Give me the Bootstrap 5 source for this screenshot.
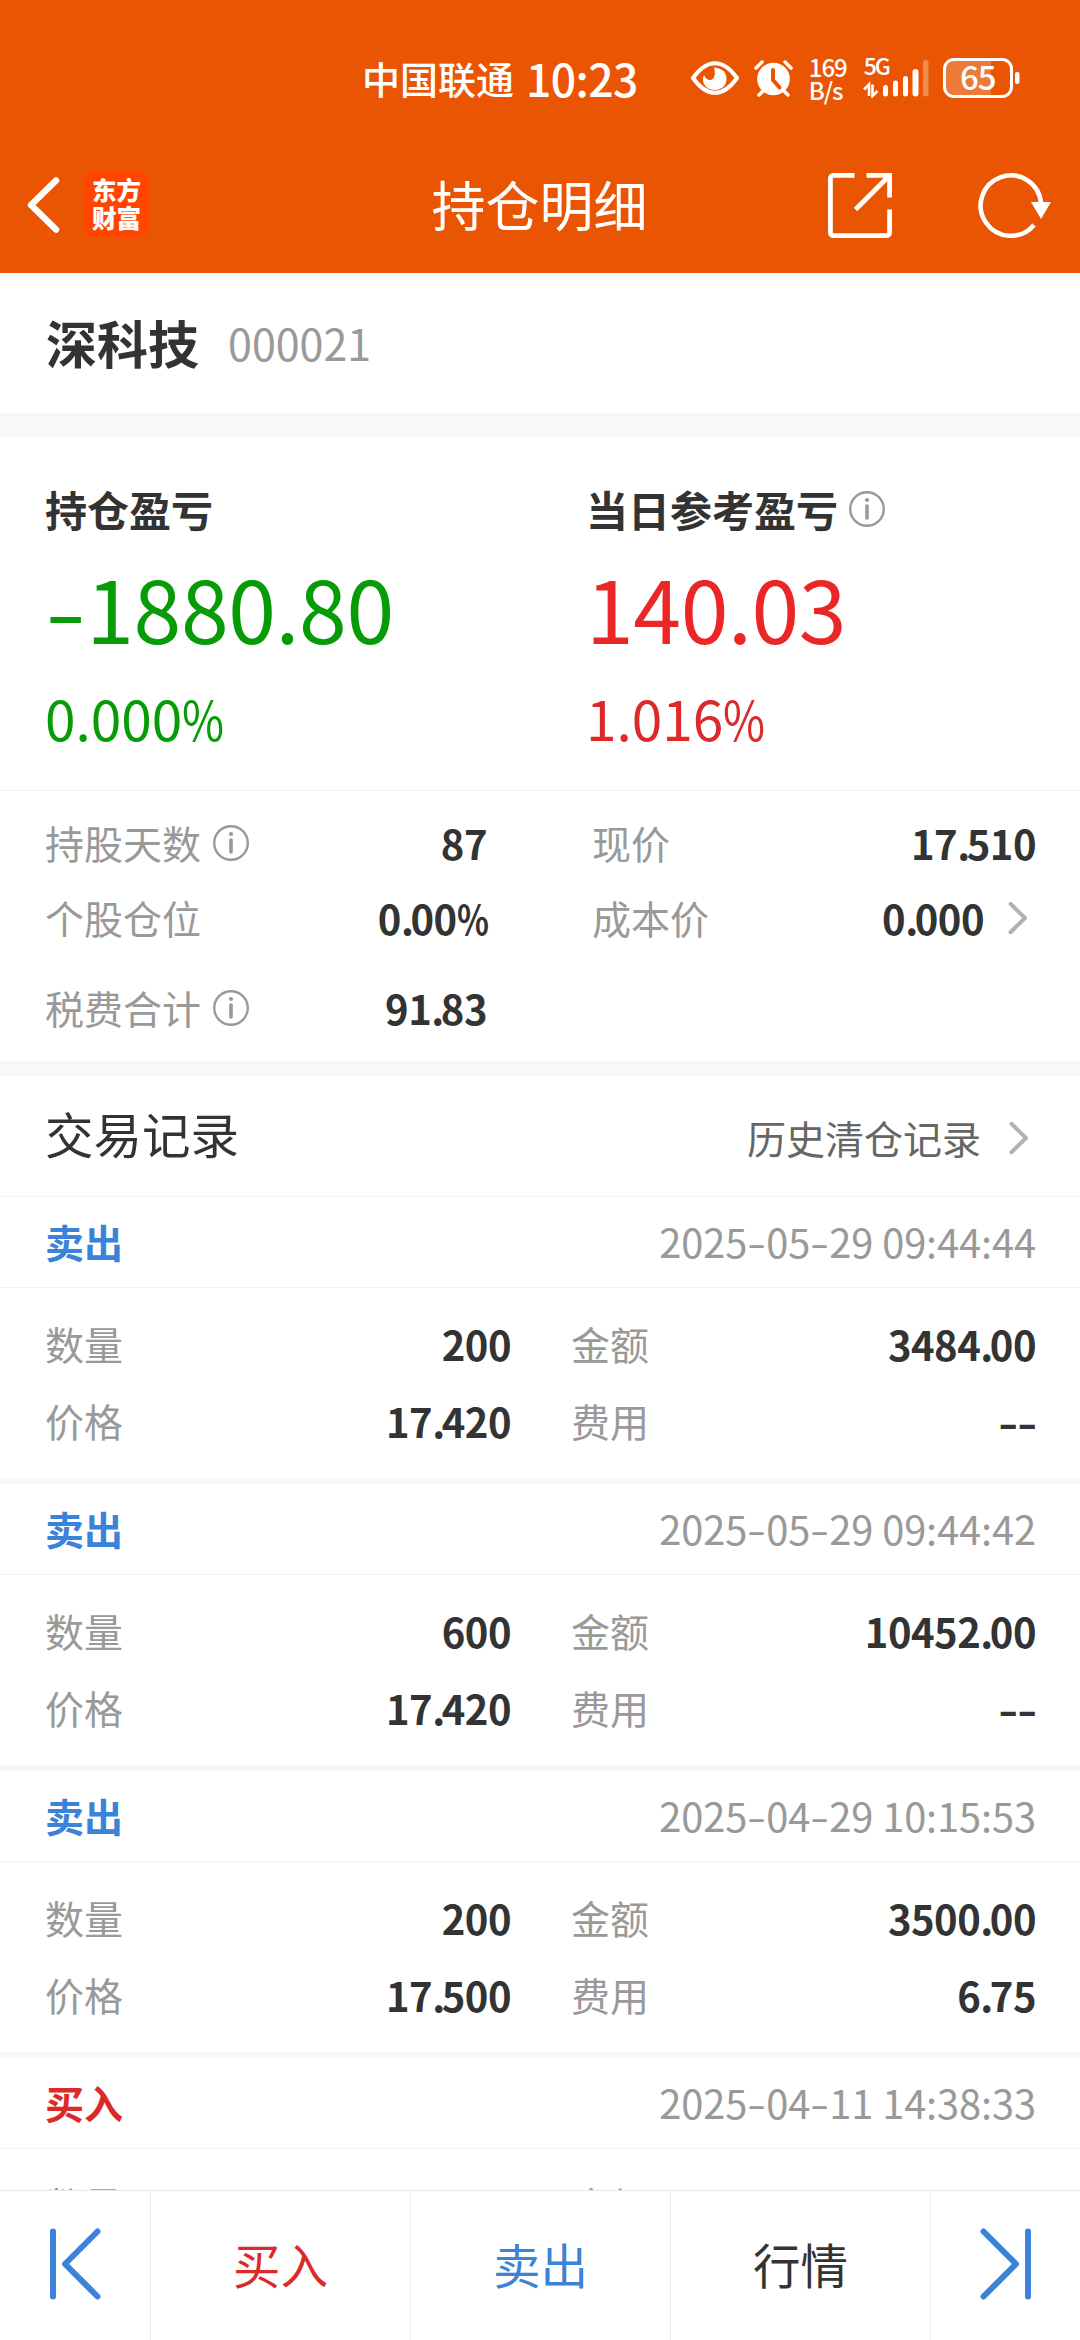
<!DOCTYPE html>
<html lang="zh-CN">
<head>
<meta charset="utf-8">
<meta name="viewport" content="width=device-width, initial-scale=1">
<title>持仓明细</title>
<link href="https://cdn.jsdelivr.net/npm/bootstrap@5.3.0/dist/css/bootstrap.min.css" rel="stylesheet">
<style>
  body { font-family: "Noto Sans CJK SC", sans-serif; color: #333; background: #fff; }
  .app { width: 1080px; height: 2340px; }
  .app svg { display: block; flex: none; }
  .top { background: #ea5503; height: 273px; }
  .status { height: 136px; padding: 44px 58px 0 362px; font-weight: 500; }
  .status-line { height: 68px; }
  .carrier { font-size: 38px; line-height: 56px; }
  .clock { font-size: 44.5px; line-height: 56px; margin-left: 12px; letter-spacing: -.6px; }
  .eye { margin-left: 53px; }
  .alarm { margin-left: 15px; }
  .speed { font-size: 24px; line-height: 23px; width: 38px; margin-left: 16px; letter-spacing: -1px; }
  .cell-signal { width: 66px; height: 44px; margin-left: 16px; }
  .gen { position: absolute; left: 1px; top: -5px; font-size: 23px; line-height: 28px; letter-spacing: -2px; }
  .battery { width: 78px; height: 40px; margin-left: 14px; }
  .battery-level { position: absolute; left: 0; top: -1px; width: 70px; line-height: 38px; font-size: 33px; letter-spacing: -1px; }
  .titlebar { height: 137px; padding: 0 28px 0 25px; }
  .side { width: 300px; }
  .logo { width: 67px; height: 67px; border-radius: 14px; background: #ff4500; margin-left: 22px; font-size: 24.5px; line-height: 28.5px; font-weight: 900; padding-bottom: 1px; }
  .page-title { font-size: 54px; line-height: 78px; margin-bottom: 2px; padding-left: 2px; }
  .stock { height: 140px; padding: 0 46px 3px; }
  .stock-name { font-size: 51px; font-weight: 700; line-height: 76px; }
  .stock-code { font-size: 43px; color: #999; margin-left: 29px; line-height: 76px; }
  .band { background: #f6f8fa; flex: none; }
  .band-lg { height: 24px; } .band-md { height: 15px; } .band-sm { height: 6px; }
  .profit { height: 353px; padding: 42px 0 0 45px; }
  .profit-col { width: 541px; }
  .profit-label { font-size: 42px; font-weight: 700; line-height: 60px; height: 60px; gap: 11px; }
  .profit-sum { font-size: 86px; line-height: 136px; letter-spacing: -.4px; }
  .profit-rate { font-size: 55px; line-height: 84px; }
  .down { color: #079c07; } .up { color: #ea2626; }
  .sell { color: #3b82d9; } .buy { color: #dc2a2a; }
  .rule { height: 1px; background: #f3f3f4; flex: none; }
  .stats { height: 270px; padding: 14px 44px 0 45px; font-size: 39px; }
  .stat-col { width: 442px; }
  .stat-col-b { width: 444px; }
  .stat { height: 75px; }
  .stat-tall { height: 105px; }
  .lbl { color: #999; gap: 12px; }
  .num { font-size: 40px; font-weight: 700; letter-spacing: -.5px; color: #333; }
  .pt { margin-right: -3px; }
  .dsh { display: inline-block; font-style: normal; width: .48em; transform: scaleX(1.38); transform-origin: 0 50%; }
  .pct { display: inline-block; width: .76em; transform: scaleX(.83); transform-origin: 0 50%; }
  .history { height: 120px; padding: 0 51px 0 45px; }
  .history-title { font-size: 48.5px; padding-bottom: 5px; }
  .history-link { font-size: 39px; color: #666; padding-top: 3px; gap: 28px; }
  .record-head { height: 90px; padding: 0 44px 2px 45px; font-size: 39px; }
  .record-kind { font-weight: 700; }
  .record-time { font-size: 39.8px; color: #999; letter-spacing: -.1px; }
  .record-body { height: 190px; padding: 17px 44px 19px 45px; font-size: 39px; }
  .record-body .cell-a { width: 466px; } .record-body .cell-b { width: 465px; }
  .record-line { height: 77px; }
  .dock { height: 150px; border-top: 1px solid #e9e9ea; background: #fff; font-size: 47.5px; }
  .dock-end { width: 150px; padding-bottom: 3px; }
  .dock-item { flex: 1 1 0; border-left: 1px solid #ececed; padding-bottom: 3px; }
  .dock-last { border-left: 1px solid #ececed; }
</style>
</head>
<body>
<svg width="0" height="0" class="position-absolute">
  <symbol id="info" viewBox="0 0 36 36"><circle cx="18" cy="18" r="16.8" fill="none" stroke="#999" stroke-width="2.4"/><circle cx="18" cy="9" r="2.1" fill="#999"/><path d="M18 15v12" stroke="#999" stroke-width="3.6" stroke-linecap="round"/></symbol>
  <symbol id="next" viewBox="0 0 20 34"><path d="M2.5 2.8 17 17 2.5 31.2" fill="none" stroke="#b2b2b2" stroke-width="4" stroke-linecap="round" stroke-linejoin="round"/></symbol>
</svg>
<div class="app d-flex flex-column overflow-hidden">
  <header class="top text-white flex-shrink-0">
    <div class="status">
      <div class="status-line d-flex align-items-center w-100 text-nowrap">
        <span class="carrier">中国联通</span><span class="clock">10:23</span>
        <svg class="eye" width="48" height="34" viewBox="0 0 48 34"><path d="M2 17C8 8.500 15 2.200 24 2.200S40 8.500 46 17C40 25.500 33 31.800 24 31.800S8 25.500 2 17Z" fill="none" stroke="#fff" stroke-width="4" stroke-linejoin="round"/><path d="M23 6.500c10 1 12.500 6 12.500 11.500C35.500 25 30 29 24 29s-12-4-12-10c0-2 .4-3.600 1-5 1.400 3.300 3.500 5 6 5 4.500 0 6-6 4-12.500Z" fill="#fff"/></svg>
        <svg class="alarm" width="39" height="37" viewBox="0 0 39 37"><circle cx="19.500" cy="19" r="16.300" fill="#fff"/><path d="M2 8 8 2M37 8l-6-6M9 31l-4 4M30 31l4 4" stroke="#fff" stroke-width="3.500" stroke-linecap="round"/><path d="M19 10v10l6.500 7.500" fill="none" stroke="#ea5503" stroke-width="4" stroke-linecap="round" stroke-linejoin="round"/></svg>
        <span class="speed d-flex flex-column"><span>169</span><span>B/s</span></span>
        <span class="cell-signal position-relative d-flex align-items-center"><span class="gen">5G</span>
          <svg width="66" height="40" viewBox="0 0 66 40" fill="#fff"><path d="M6 38V26.500L1 31.500M9.500 26.500V38l5-5" fill="none" stroke="#fff" stroke-width="2.600"/><rect x="20" y="27" width="5" height="11.500" rx="2.500"/><rect x="30" y="22.500" width="5" height="16" rx="2.500"/><rect x="40" y="18" width="5" height="20.500" rx="2.500"/><rect x="49.500" y="11" width="6" height="27.500" rx="3"/><rect x="60" y="2" width="5.500" height="36.500" rx="2.700" opacity=".32"/></svg></span>
        <span class="battery position-relative"><svg width="78" height="40" viewBox="0 0 78 40"><path d="M11 2h37v36H11a9 9 0 0 1-9-9V11a9 9 0 0 1 9-9Z" fill="#fff" opacity=".22"/><rect x="1.500" y="1.500" width="67" height="37" rx="9.500" fill="none" stroke="#fff" stroke-width="3"/><rect x="72" y="14" width="4.500" height="12" rx="2" fill="#fff"/></svg><span class="battery-level text-center">65</span></span>
      </div>
    </div>
    <div class="titlebar d-flex align-items-center justify-content-between">
      <div class="side d-flex align-items-center">
        <svg width="36" height="56" viewBox="0 0 36 56"><path d="M31 3.500 6 28 31 52.500" fill="none" stroke="#fff" stroke-width="6.500" stroke-linecap="round" stroke-linejoin="round"/></svg>
        <div class="logo d-flex flex-column align-items-center justify-content-center"><span>东方</span><span>财富</span></div>
      </div>
      <div class="page-title">持仓明细</div>
      <div class="side d-flex align-items-center justify-content-end">
        <svg width="64" height="66" viewBox="0 0 64 66" fill="none" stroke="#fff" stroke-width="4.800"><path d="M26.500 3.400H5.400a3 3 0 0 0-3 3v54.200a3 3 0 0 0 3 3h53.200a3 3 0 0 0 3-3V37.500M38.500 3.400h23.100v22M61 4 27.500 37.500"/></svg>
        <svg style="margin-left:86px" width="74" height="66" viewBox="0 0 74 66"><path d="M63 31.500A30.200 30.200 0 1 0 56 53" fill="none" stroke="#fff" stroke-width="4.600"/><path d="M53 30h20L63 47Z" fill="#fff"/></svg>
      </div>
    </div>
  </header>

  <section class="stock d-flex align-items-center flex-shrink-0"><span class="stock-name">深科技</span><span class="stock-code">000021</span></section>
  <div class="band band-lg"></div>

  <section class="profit d-flex flex-shrink-0">
    <div class="profit-col">
      <div class="profit-label d-flex align-items-center">持仓盈亏</div>
      <div class="profit-sum down"><i class="dsh">-</i>1880.80</div>
      <div class="profit-rate down">0.000<span class="pct">%</span></div>
    </div>
    <div>
      <div class="profit-label d-flex align-items-center">当日参考盈亏<svg width="36" height="36"><use href="#info"/></svg></div>
      <div class="profit-sum up">140.03</div>
      <div class="profit-rate buy">1.016<span class="pct">%</span></div>
    </div>
  </section>
  <div class="rule"></div>

  <section class="stats d-flex justify-content-between flex-shrink-0">
    <div class="stat-col">
      <div class="stat d-flex align-items-center justify-content-between"><span class="lbl d-flex align-items-center">持股天数<svg width="36" height="36"><use href="#info"/></svg></span><span class="num">87</span></div>
      <div class="stat d-flex align-items-center justify-content-between"><span class="lbl">个股仓位</span><span class="num">0<span class="pt">.</span>00<span class="pct">%</span></span></div>
      <div class="stat stat-tall d-flex align-items-center justify-content-between"><span class="lbl d-flex align-items-center">税费合计<svg width="36" height="36"><use href="#info"/></svg></span><span class="num">91<span class="pt">.</span>83</span></div>
    </div>
    <div class="stat-col-b">
      <div class="stat d-flex align-items-center justify-content-between"><span class="lbl">现价</span><span class="num">17<span class="pt">.</span>510</span></div>
      <div class="stat d-flex align-items-center"><span class="lbl me-auto">成本价</span><span class="num">0<span class="pt">.</span>000</span><svg style="margin:0 8px 0 24px" width="20" height="34"><use href="#next"/></svg></div>
    </div>
  </section>
  <div class="band band-md"></div>

  <section class="history d-flex align-items-center justify-content-between flex-shrink-0">
    <span class="history-title">交易记录</span>
    <span class="history-link d-flex align-items-center">历史清仓记录<svg width="20" height="34"><use href="#next"/></svg></span>
  </section>
  <div class="rule"></div>

  <main class="flex-grow-1 overflow-hidden" style="min-height:0">
    <article>
      <div class="record-head d-flex align-items-center justify-content-between"><span class="record-kind sell">卖出</span><span class="record-time">2025<i class="dsh">-</i>05<i class="dsh">-</i>29 09:44:44</span></div>
      <div class="rule"></div>
      <div class="record-body">
        <div class="record-line d-flex justify-content-between align-items-center"><div class="cell-a d-flex justify-content-between align-items-center"><span class="lbl">数量</span><span class="num">200</span></div><div class="cell-b d-flex justify-content-between align-items-center"><span class="lbl">金额</span><span class="num">3484<span class="pt">.</span>00</span></div></div>
        <div class="record-line d-flex justify-content-between align-items-center"><div class="cell-a d-flex justify-content-between align-items-center"><span class="lbl">价格</span><span class="num">17<span class="pt">.</span>420</span></div><div class="cell-b d-flex justify-content-between align-items-center"><span class="lbl">费用</span><span class="num"><i class="dsh">-</i><i class="dsh">-</i></span></div></div>
      </div>
      <div class="band band-sm"></div>
    </article>
    <article>
      <div class="record-head d-flex align-items-center justify-content-between"><span class="record-kind sell">卖出</span><span class="record-time">2025<i class="dsh">-</i>05<i class="dsh">-</i>29 09:44:42</span></div>
      <div class="rule"></div>
      <div class="record-body">
        <div class="record-line d-flex justify-content-between align-items-center"><div class="cell-a d-flex justify-content-between align-items-center"><span class="lbl">数量</span><span class="num">600</span></div><div class="cell-b d-flex justify-content-between align-items-center"><span class="lbl">金额</span><span class="num">10452<span class="pt">.</span>00</span></div></div>
        <div class="record-line d-flex justify-content-between align-items-center"><div class="cell-a d-flex justify-content-between align-items-center"><span class="lbl">价格</span><span class="num">17<span class="pt">.</span>420</span></div><div class="cell-b d-flex justify-content-between align-items-center"><span class="lbl">费用</span><span class="num"><i class="dsh">-</i><i class="dsh">-</i></span></div></div>
      </div>
      <div class="band band-sm"></div>
    </article>
    <article>
      <div class="record-head d-flex align-items-center justify-content-between"><span class="record-kind sell">卖出</span><span class="record-time">2025<i class="dsh">-</i>04<i class="dsh">-</i>29 10:15:53</span></div>
      <div class="rule"></div>
      <div class="record-body">
        <div class="record-line d-flex justify-content-between align-items-center"><div class="cell-a d-flex justify-content-between align-items-center"><span class="lbl">数量</span><span class="num">200</span></div><div class="cell-b d-flex justify-content-between align-items-center"><span class="lbl">金额</span><span class="num">3500<span class="pt">.</span>00</span></div></div>
        <div class="record-line d-flex justify-content-between align-items-center"><div class="cell-a d-flex justify-content-between align-items-center"><span class="lbl">价格</span><span class="num">17<span class="pt">.</span>500</span></div><div class="cell-b d-flex justify-content-between align-items-center"><span class="lbl">费用</span><span class="num">6<span class="pt">.</span>75</span></div></div>
      </div>
      <div class="band band-sm"></div>
    </article>
    <article>
      <div class="record-head d-flex align-items-center justify-content-between"><span class="record-kind buy">买入</span><span class="record-time">2025<i class="dsh">-</i>04<i class="dsh">-</i>11 14:38:33</span></div>
      <div class="rule"></div>
      <div class="record-body">
        <div class="record-line d-flex justify-content-between align-items-center"><div class="cell-a d-flex align-items-center"><span class="lbl">数量</span></div><div class="cell-b d-flex align-items-center"><span class="lbl">金额</span></div></div>
      </div>
    </article>
  </main>

  <nav class="dock d-flex flex-shrink-0">
    <div class="dock-end d-flex align-items-center justify-content-center"><svg width="52" height="72" viewBox="0 0 52 72" fill="none" stroke="#3b82d9" stroke-width="6" stroke-linecap="round" stroke-linejoin="round"><path d="M4 3.500v65M48.500 3.500 16 36l32.500 32.500"/></svg></div>
    <div class="dock-item d-flex align-items-center justify-content-center buy">买入</div>
    <div class="dock-item d-flex align-items-center justify-content-center sell">卖出</div>
    <div class="dock-item d-flex align-items-center justify-content-center">行情</div>
    <div class="dock-end dock-last d-flex align-items-center justify-content-center"><svg width="52" height="72" viewBox="0 0 52 72" fill="none" stroke="#3b82d9" stroke-width="6" stroke-linecap="round" stroke-linejoin="round"><path d="M48 3.500v65M3.500 3.500 36 36 3.500 68.500"/></svg></div>
  </nav>
</div>
<script src="https://cdn.jsdelivr.net/npm/bootstrap@5.3.0/dist/js/bootstrap.bundle.min.js"></script>
</body>
</html>
